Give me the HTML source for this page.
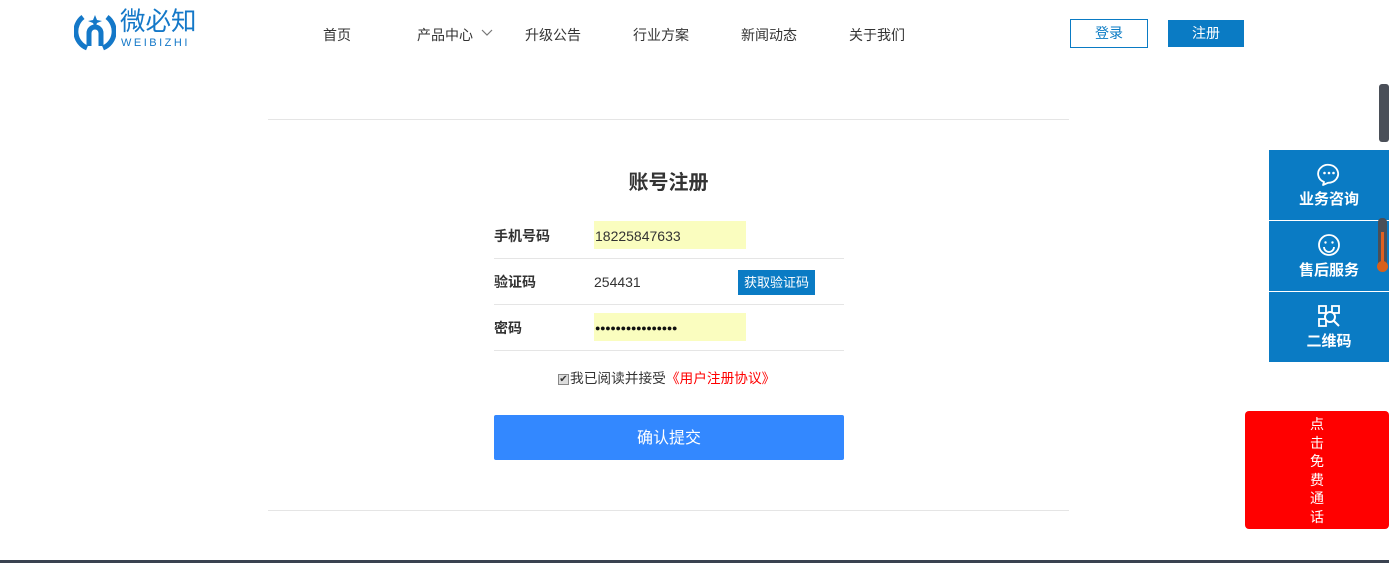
<!DOCTYPE html>
<html><head><meta charset="utf-8"><style>
*{margin:0;padding:0;box-sizing:border-box}
body{width:1389px;height:563px;position:relative;background:#fff;font-family:"Liberation Sans","Noto Sans CJK SC",sans-serif;color:#333;overflow:hidden}
.a{position:absolute}
.nav{font-size:14px;color:#333;top:25px}
.lbl{font-size:14px;font-weight:bold;color:#333;line-height:16px}
.hr{height:1px;background:#e5e5e5}
.side{left:1269px;width:120px;height:70px;background:#0a7bc4;color:#fff;font-size:15px;text-align:center}
</style></head><body>
<svg class="a" style="left:74px;top:12px" width="42" height="40" viewBox="0 0 42 40"><path d="M9 5 A18 18 0 0 0 13 36" fill="none" stroke="#1478c8" stroke-width="5"/><path d="M33 5 A18 18 0 0 1 29 36" fill="none" stroke="#1478c8" stroke-width="5"/><path d="M15 34 V21 a6 6 0 0 1 12 0 V34" fill="none" stroke="#1478c8" stroke-width="5"/><path d="M21 3 L23 8 L28 9 L23 11 L21 16 L19 11 L14 9 L19 8Z" fill="#1478c8"/></svg>
<div class="a" style="left:120px;top:7px;font-size:25.5px;line-height:30px;color:#1478c8">微必知</div>
<div class="a" style="left:121px;top:37px;font-size:11px;line-height:12px;color:#1478c8;letter-spacing:2.5px">WEIBIZHI</div>
<div class="a nav" style="left:323px">首页</div>
<div class="a nav" style="left:417px">产品中心</div>
<svg class="a" style="left:481px;top:29px" width="12" height="8"><path d="M1 1 L6 6 L11 1" fill="none" stroke="#777" stroke-width="1.2"/></svg>
<div class="a nav" style="left:525px">升级公告</div>
<div class="a nav" style="left:633px">行业方案</div>
<div class="a nav" style="left:741px">新闻动态</div>
<div class="a nav" style="left:849px">关于我们</div>
<div class="a" style="left:1070px;top:19px;width:78px;height:29px;border:1px solid #0a7bc4;color:#0a7bc4;font-size:14px;text-align:center;line-height:27px">登录</div>
<div class="a" style="left:1168px;top:20px;width:76px;height:27px;background:#0a7bc4;color:#fff;font-size:14px;text-align:center;line-height:27px">注册</div>
<div class="a hr" style="left:268px;top:119px;width:801px"></div>
<div class="a" style="left:268px;top:166px;width:801px;text-align:center;font-size:20px;font-weight:bold;color:#333">账号注册</div>
<div class="a lbl" style="left:494px;top:228px">手机号码</div>
<div class="a" style="left:594px;top:221px;width:152px;height:28px;background:#fafdbf;font-size:14px;line-height:30px;padding-left:1px">18225847633</div>
<div class="a hr" style="left:494px;top:258px;width:350px"></div>
<div class="a lbl" style="left:494px;top:274px">验证码</div>
<div class="a" style="left:594px;top:274px;font-size:14px;line-height:16px">254431</div>
<div class="a" style="left:738px;top:270px;width:77px;height:25px;background:#0a7bc4;color:#fff;font-size:13px;text-align:center;line-height:25px">获取验证码</div>
<div class="a hr" style="left:494px;top:304px;width:350px"></div>
<div class="a lbl" style="left:494px;top:320px">密码</div>
<div class="a" style="left:594px;top:313px;width:152px;height:28px;background:#fafdbf;font-size:9px;line-height:30px;letter-spacing:-0.3px;padding-left:1px;color:#111">●●●●●●●●●●●●●●●●</div>
<div class="a hr" style="left:494px;top:350px;width:350px"></div>
<div class="a" style="left:558px;top:374px;width:11px;height:11px;border:1px solid #888;background:#ddd;font-size:10px;line-height:9px;text-align:center">✔</div>
<div class="a" style="left:570px;top:371px;font-size:13.7px;line-height:16px;color:#333">我已阅读并接受<span style="color:#f00">《用户注册协议》</span></div>
<div class="a" style="left:494px;top:415px;width:350px;height:45px;background:#3388ff;border-radius:2px;color:#fff;font-size:16px;text-align:center;line-height:47px">确认提交</div>
<div class="a hr" style="left:268px;top:510px;width:801px"></div>
<div class="a" style="left:0;top:560px;width:1389px;height:3px;background:#3a4250"></div>
<div class="a" style="left:1379px;top:84px;width:10px;height:58px;background:#4a4f58;border-radius:3px"></div>
<div class="a side" style="top:150px"><svg style="margin-top:12px" width="24" height="24" viewBox="0 0 24 24"><path d="M7 20 A10 9 0 1 1 11 20.8 L6 23 Z" fill="none" stroke="#fff" stroke-width="1.8" stroke-linejoin="round"/><circle cx="7.5" cy="11" r="1.3" fill="#fff"/><circle cx="12" cy="11" r="1.3" fill="#fff"/><circle cx="16.5" cy="11" r="1.3" fill="#fff"/></svg><div style="line-height:20px;font-weight:bold">业务咨询</div></div>
<div class="a side" style="top:221px"><svg style="margin-top:12px" width="24" height="24" viewBox="0 0 24 24"><circle cx="12" cy="12" r="10" fill="none" stroke="#fff" stroke-width="1.8"/><circle cx="8.5" cy="9.5" r="1.2" fill="#fff"/><circle cx="15.5" cy="9.5" r="1.2" fill="#fff"/><path d="M7 14 a5 5 0 0 0 10 0" fill="none" stroke="#fff" stroke-width="1.8"/></svg><div style="line-height:20px;font-weight:bold">售后服务</div></div>
<div class="a side" style="top:292px"><svg style="margin-top:12px" width="24" height="24" viewBox="0 0 24 24"><rect x="2" y="2" width="7" height="7" fill="none" stroke="#fff" stroke-width="1.8"/><rect x="15" y="2" width="7" height="7" fill="none" stroke="#fff" stroke-width="1.8"/><rect x="2" y="15" width="7" height="7" fill="none" stroke="#fff" stroke-width="1.8"/><circle cx="13" cy="13" r="5" fill="#0a7bc4" stroke="#fff" stroke-width="2"/><path d="M17 17 L22 22" stroke="#fff" stroke-width="2"/></svg><div style="line-height:20px;font-weight:bold">二维码</div></div>
<div class="a" style="left:1378px;top:218px;width:9px;height:52px;background:#4a4f58;border-radius:4px"></div>
<div class="a" style="left:1381px;top:232px;width:3px;height:32px;background:#e06020"></div>
<div class="a" style="left:1377px;top:261px;width:11px;height:11px;border-radius:50%;background:#d8601a"></div>
<div class="a" style="left:1245px;top:411px;width:144px;height:118px;background:#ff0000;border-radius:4px;color:#fff;font-size:14px;line-height:18.5px;text-align:center;padding-top:4px">点<br>击<br>免<br>费<br>通<br>话</div>
</body></html>
